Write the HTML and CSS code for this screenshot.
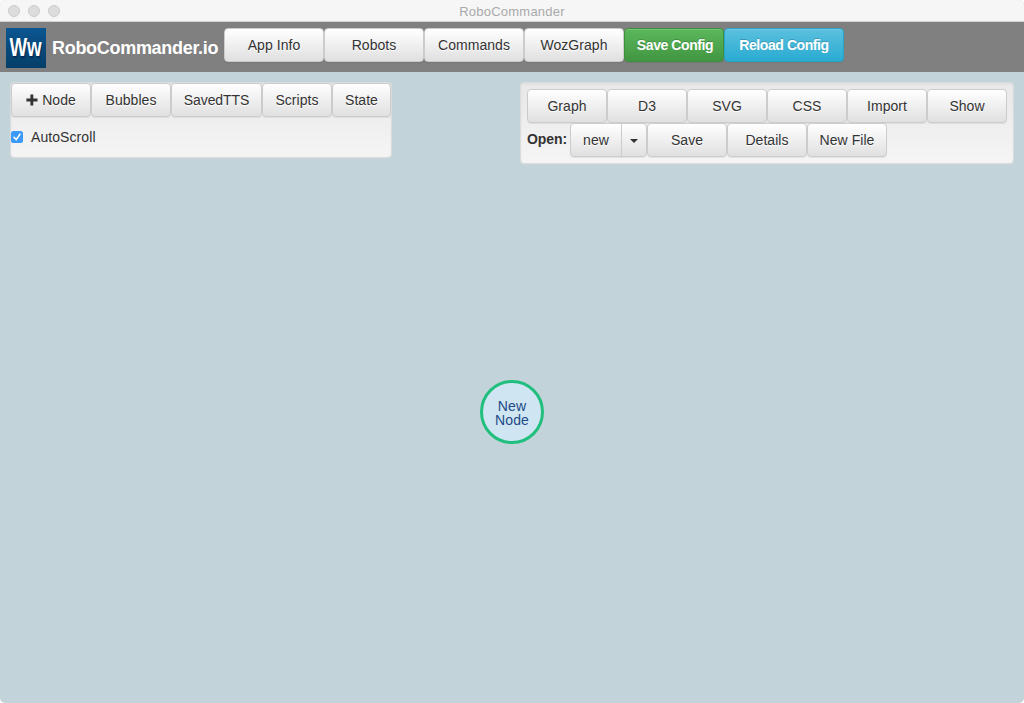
FILE: index.html
```html
<!DOCTYPE html>
<html lang="en">
<head>
<meta charset="utf-8">
<title>RoboCommander</title>
<link rel="stylesheet" href="styles.css">
</head>
<body>
<div class="window">
  <header class="titlebar">
    <div class="lights"><i></i><i></i><i></i></div>
    <span class="title">RoboCommander</span>
  </header>
  <nav class="navbar">
    <div class="logo"><span>Ww</span></div>
    <div class="brand"><span>RoboCommander.io</span></div>
    <button class="btn w100">App Info</button>
    <button class="btn w100">Robots</button>
    <button class="btn w100">Commands</button>
    <button class="btn w100">WozGraph</button>
    <button class="btn w100 success">Save Config</button>
    <button class="btn w120 info">Reload Config</button>
  </nav>
  <main class="stage">
    <section class="panel left">
      <div class="row">
        <button class="btn w80"><svg class="plus" width="12" height="12" viewBox="0 0 12 12"><path d="M4.4 .5h2.9v4.1h4.2v2.9H7.3v4H4.4v-4H.4V4.6h4z"/></svg>Node</button>
        <button class="btn w80">Bubbles</button>
        <button class="btn w91 tight">SavedTTS</button>
        <button class="btn w70">Scripts</button>
        <button class="btn w59">State</button>
      </div>
      <label class="check"><svg width="12" height="12" viewBox="0 0 12 12"><rect width="12" height="12" rx="2.5"/><path d="M3 6.3 5.2 8.6 9 3.2"/></svg><span>AutoScroll</span></label>
    </section>
    <section class="panel right">
      <div class="row">
        <button class="btn w80">Graph</button>
        <button class="btn w80">D3</button>
        <button class="btn w80">SVG</button>
        <button class="btn w80">CSS</button>
        <button class="btn w80">Import</button>
        <button class="btn w80">Show</button>
      </div>
      <div class="row">
        <b class="open"><span>Open:</span></b>
        <button class="btn file">new</button>
        <button class="btn toggle" aria-label="Choose file"><i class="caret"></i></button>
        <button class="btn w80">Save</button>
        <button class="btn w80">Details</button>
        <button class="btn w80">New File</button>
      </div>
    </section>
    <div class="node"><span>New</span><span>Node</span></div>
  </main>
</div>
</body>
</html>
```
FILE: styles.css
```css
* { box-sizing: border-box; }
body { margin: 0; background: #fff; color: #333; font: 14px/20px "Liberation Sans", Arial, sans-serif; }
.window { height: 703px; display: flex; flex-direction: column; overflow: hidden; border-radius: 5px; background: #c3d3da; }
.titlebar { height: 22px; flex: none; display: grid; grid-template-columns: 1fr auto 1fr; align-items: center; background: #f6f6f6; border-bottom: 1px solid #d2d2d2; }
.lights { display: flex; gap: 8px; padding-left: 8px; }
.lights i { width: 12px; height: 12px; border-radius: 50%; background: #dcdcdc; border: 1px solid #cbcbcb; }
.title { padding-top: 2px; line-height: 19px; color: #a9a9a9; font-size: 13px; letter-spacing: .22px; }
.navbar { height: 50px; flex: none; display: flex; align-items: flex-start; padding: 6px; background: #808080; }
.logo { width: 40px; height: 40px; display: flex; align-items: flex-start; justify-content: center; padding-top: 9px; background: linear-gradient(#0b5691, #053e68); color: #fff; font-size: 25px; font-weight: bold; text-shadow: 1px 2px 1px #032c55; }
.logo span { transform: scaleX(.75); }
.brand { width: 178px; padding: 10px 0 0 6px; color: #fff; font-size: 18px; font-weight: bold; letter-spacing: -.3px; white-space: nowrap; }
.row { display: flex; }
.btn { height: 34px; flex: none; display: flex; align-items: center; justify-content: center; margin: 0; padding: 0; border: 1px solid #ccc; border-radius: 4px; background: linear-gradient(#fff, #e0e0e0); color: #333; font: inherit; letter-spacing: .05px; white-space: nowrap; text-shadow: 0 1px 0 #fff; box-shadow: inset 0 1px 0 rgba(255,255,255,.15), 0 1px 1px rgba(0,0,0,.075); }
.w59 { width: 59px; }
.w70 { width: 70px; }
.w80 { width: 80px; }
.w91 { width: 91px; }
.w100 { width: 100px; }
.w120 { width: 120px; }
.tight { letter-spacing: -.1px; }
.success, .info { color: #fff; font-weight: bold; letter-spacing: -.42px; text-shadow: 0 -1px 0 rgba(0,0,0,.2); }
.success { background: linear-gradient(#5cb85c, #419641); border-color: #3e8f3e; }
.info { background: linear-gradient(#5bc0de, #2aabd2); border-color: #28a4c9; }
.success { padding-left: 2px; }
.stage { flex: 1; display: grid; grid-template-columns: 382px 494px; justify-content: space-between; align-items: start; padding: 10px 10px 0; position: relative; }
.panel { border: 1px solid #dcdcdc; border-radius: 4px; background: linear-gradient(#e8e8e8, #f5f5f5); box-shadow: inset 0 1px 3px rgba(0,0,0,.05), 0 1px 0 rgba(255,255,255,.1); }
.left { height: 76px; }
.right { height: 82px; padding: 6px; }
.plus { margin-right: 4px; fill: #333; }
.check { display: flex; align-items: center; margin-top: 10px; height: 20px; letter-spacing: .08px; }
.check svg { margin-right: 8px; }
.check rect { fill: #3b99fc; }
.check path { fill: none; stroke: #fff; stroke-width: 1.6; stroke-linecap: round; }
.open { width: 43px; padding-top: 6px; letter-spacing: -.1px; }
.file { width: 52px; border-radius: 4px 0 0 4px; }
.toggle { width: 26px; margin-left: -1px; border-radius: 0 4px 4px 0; }
.caret { border: 4px solid transparent; border-top-color: #333; border-bottom: 0; margin-top: 2px; }
.node { position: absolute; left: 480px; top: 308px; width: 64px; height: 64px; display: flex; flex-direction: column; align-items: center; justify-content: center; padding-top: 2px; border: 3px solid #20bf7e; border-radius: 50%; background: #d0e5f2; color: #204a87; line-height: 14px; letter-spacing: .1px; }
```
